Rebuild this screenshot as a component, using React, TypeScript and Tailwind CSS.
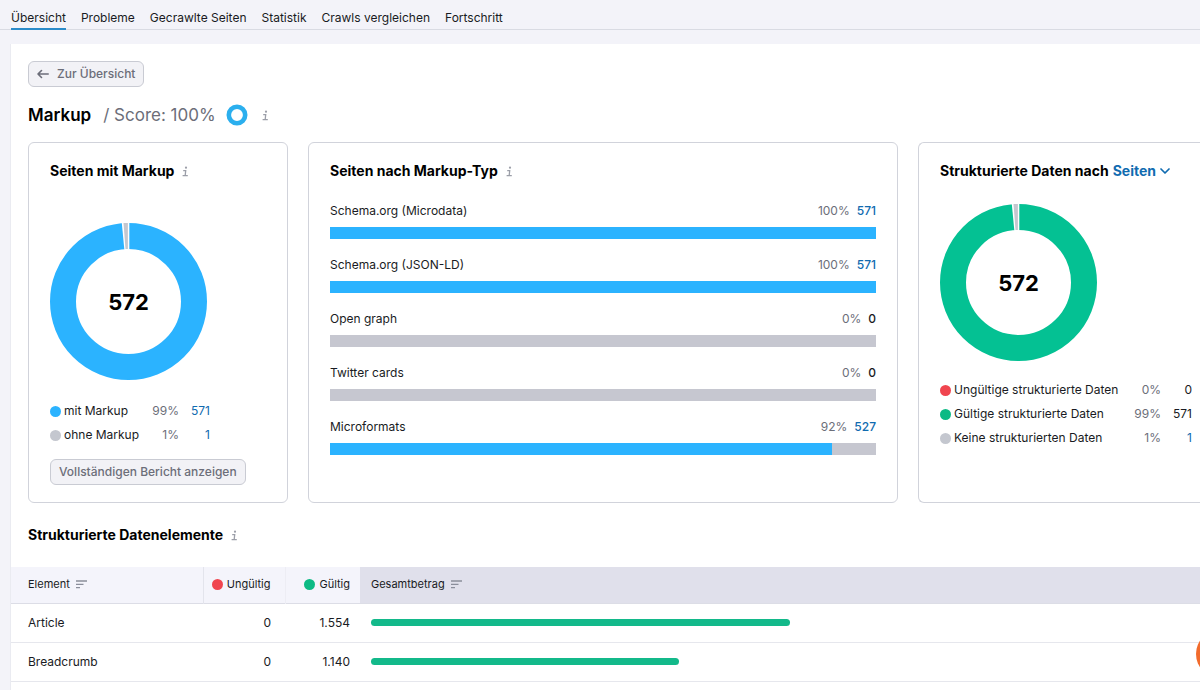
import { useState } from "react";
import clsx from "clsx";

const tabs = ["Übersicht", "Probleme", "Gecrawlte Seiten", "Statistik", "Crawls vergleichen", "Fortschritt"];

const markupTypes = [
    { name: "Schema.org (Microdata)", percent: 100, count: 571 },
    { name: "Schema.org (JSON-LD)", percent: 100, count: 571 },
    { name: "Open graph", percent: 0, count: 0 },
    { name: "Twitter cards", percent: 0, count: 0 },
    { name: "Microformats", percent: 92, count: 527 },
];

const elements = [
    { name: "Article", invalid: "0", valid: "1.554", width: 50.6 },
    { name: "Breadcrumb", invalid: "0", valid: "1.140", width: 37.1 },
];

type LegendItem = { label: string; percent: string; count: number; dot: string; link?: boolean };

const markupLegend: LegendItem[] = [
    { label: "mit Markup", percent: "99%", count: 571, dot: "bg-[#2bb3ff]", link: true },
    { label: "ohne Markup", percent: "1%", count: 1, dot: "bg-[#c4c7cf]", link: true },
];

const dataLegend: LegendItem[] = [
    { label: "Ungültige strukturierte Daten", percent: "0%", count: 0, dot: "bg-[#f0454f]" },
    { label: "Gültige strukturierte Daten", percent: "99%", count: 571, dot: "bg-[#0cba84]" },
    { label: "Keine strukturierten Daten", percent: "1%", count: 1, dot: "bg-[#c4c7cf]", link: true },
];

function InfoButton() {
    return (
        <button aria-label="Info" className="shrink-0 text-[#9b9ea8]">
            <svg width="7" height="11" viewBox="0 0 7 11" fill="none" stroke="currentColor" strokeWidth="1.3">
                <path d="M1.2 4.6H3.7L3.2 9.5M.6 9.6H5.8" />
                <circle cx="4" cy="1.7" r="1.1" fill="currentColor" stroke="none" />
            </svg>
        </button>
    );
}

function SortIcon() {
    return (
        <svg width="11" height="9" viewBox="0 0 11 9" fill="none" stroke="#8a8e9b" strokeWidth="1.3" aria-hidden="true">
            <path d="M0 1H11M0 4.3H7.5M0 7.6H4" />
        </svg>
    );
}

function Donut({ color, total }: { color: string; total: number }) {
    return (
        <svg width="157" height="157" viewBox="0 0 157 157" role="img" aria-label={`${total} Seiten`}>
            <circle cx="78.5" cy="78.5" r="65.5" fill="none" stroke={color} strokeWidth="26" />
            <path d="M71.7 -1H79.3V27H74.4Z" fill="#fff" />
            <path d="M73.5 0H77.9V26H75.5Z" fill="#c4c7cf" />
            <text x="78.5" y="87" textAnchor="middle" fill="#000" className="text-[22px] font-bold">
                {total}
            </text>
        </svg>
    );
}

function Legend({ items, className }: { items: LegendItem[]; className: string }) {
    return (
        <ul className={className}>
            {items.map((item) => (
                <li key={item.label} className="flex items-center h-6">
                    <span className={clsx("size-[11px] mr-[3px] rounded-full shrink-0", item.dot)} />
                    <span className="flex-1 whitespace-nowrap">{item.label}</span>
                    <span className="text-[#6c6e79]">{item.percent}</span>
                    <span className="w-[31px] text-right">
                        {item.link ? (
                            <a href="#" className="text-[#106bb0]">{item.count}</a>
                        ) : (
                            item.count
                        )}
                    </span>
                </li>
            ))}
        </ul>
    );
}

function MarkupTypeBar({ name, percent, count }: { name: string; percent: number; count: number }) {
    return (
        <div>
            <div className="flex items-center justify-between leading-5">
                <span>{name}</span>
                <span className="flex gap-[7px]">
                    <span className="text-[#6c6e79]">{percent}%</span>
                    {count > 0 ? (
                        <a href="#" className="font-medium text-[#106bb0]">{count}</a>
                    ) : (
                        <span className="font-medium">{count}</span>
                    )}
                </span>
            </div>
            <div className="h-3 mt-1.5 bg-[#c6c7d0]">
                <div className="h-full bg-[#2bb3ff]" style={{ width: `${percent}%` }} />
            </div>
        </div>
    );
}

export default function App() {
    const [activeTab, setActiveTab] = useState("Übersicht");

    return (
        <div className="flex flex-col min-h-screen overflow-x-hidden bg-[#f3f3f9] font-['Inter','Liberation_Sans',sans-serif] text-xs text-[#191b23]">
            <nav className="flex gap-[15px] h-[30px] px-[11px] border-b border-[#d9dbe3]">
                {tabs.map((tab) => (
                    <button
                        key={tab}
                        onClick={() => setActiveTab(tab)}
                        className={clsx(
                            "h-[30px] pt-[7px] whitespace-nowrap border-b-2",
                            tab === activeTab ? "border-[#2a8bc9]" : "border-transparent"
                        )}
                    >
                        {tab}
                    </button>
                ))}
            </nav>

            <main className="flex-1 mt-3.5 ml-2.5 bg-white border-l border-[#eaebf1]">
                <div className="pt-[17px] pl-[17px]">
                    <button className="flex items-center gap-2 h-[26px] px-2 rounded-md border border-[#c9cbd3] bg-[#f2f2f6] text-[#6c6e79] font-medium">
                        <svg width="12" height="10" viewBox="0 0 12 10" fill="none" stroke="currentColor" strokeWidth="1.6" strokeLinecap="round" strokeLinejoin="round">
                            <path d="M11.2 5H1M4.5 1.5L1 5L4.5 8.5" />
                        </svg>
                        Zur Übersicht
                    </button>

                    <div className="flex items-center h-6 mt-4 text-[17px]">
                        <h1 className="font-semibold text-black">Markup</h1>
                        <span className="ml-3 text-[#6c6e79]">/ Score: 100%</span>
                        <svg width="22" height="22" viewBox="0 0 22 22" className="ml-2.5 mr-3.5" aria-hidden="true">
                            <circle cx="11" cy="11" r="8.2" fill="none" stroke="#2bafee" strokeWidth="4.6" />
                        </svg>
                        <InfoButton />
                    </div>

                    <div className="grid grid-cols-[260px_1fr_282px] gap-5 mt-[15px]">
                        <section className="pt-[18px] pb-[17px] px-[21px] rounded-md border border-[#d1d3db]">
                            <div className="flex items-center gap-2 h-5">
                                <h2 className="text-sm font-bold text-black">Seiten mit Markup</h2>
                                <InfoButton />
                            </div>
                            <div className="mt-[42px]">
                                <Donut color="#2bb3ff" total={572} />
                            </div>
                            <Legend items={markupLegend} className="w-40 mt-[19px]" />
                            <button className="flex items-center h-[26px] mt-3 px-2 rounded-md border border-[#c9cbd3] bg-[#f2f2f6] text-[#6c6e79] font-medium whitespace-nowrap">
                                Vollständigen Bericht anzeigen
                            </button>
                        </section>

                        <section className="pt-[18px] px-[21px] rounded-md border border-[#d1d3db]">
                            <div className="flex items-center gap-2 h-5">
                                <h2 className="text-sm font-bold text-black">Seiten nach Markup-Typ</h2>
                                <InfoButton />
                            </div>
                            <div className="flex flex-col gap-4 mt-5">
                                {markupTypes.map((type) => (
                                    <MarkupTypeBar key={type.name} {...type} />
                                ))}
                            </div>
                        </section>

                        <section className="pt-[18px] pl-[21px] pr-2 rounded-l-md border border-r-0 border-[#d1d3db]">
                            <div className="flex items-center gap-1 h-5 text-sm font-bold whitespace-nowrap">
                                <h2 className="text-black">
                                    <label htmlFor="group">Strukturierte Daten nach</label>
                                </h2>
                                <select id="group" className="appearance-none field-sizing-content text-[#106bb0]">
                                    <option>Seiten</option>
                                    <option>Elementen</option>
                                </select>
                                <svg width="10" height="6" viewBox="0 0 10 6" fill="none" stroke="#106bb0" strokeWidth="1.7" strokeLinecap="round" strokeLinejoin="round">
                                    <path d="M1 1L5 5L9 1" />
                                </svg>
                            </div>
                            <div className="mt-[23px]">
                                <Donut color="#04c193" total={572} />
                            </div>
                            <Legend items={dataLegend} className="mt-[17px]" />
                        </section>
                    </div>

                    <div className="flex items-center gap-2 h-5 mt-[22px]">
                        <h2 className="text-sm font-bold text-black">Strukturierte Datenelemente</h2>
                        <InfoButton />
                    </div>
                </div>

                <table className="w-full mt-[22px] table-fixed border-collapse">
                    <colgroup>
                        <col className="w-[192px]" />
                        <col className="w-[82px]" />
                        <col className="w-[75px]" />
                        <col />
                    </colgroup>
                    <thead>
                        <tr className="h-9 bg-[#f4f4fb] border-b border-[#dcdde6] text-[11px] text-left">
                            <th className="pl-[17px] font-normal border-r border-[#e3e4ec]">
                                <button className="flex items-center gap-1.5">Element <SortIcon /></button>
                            </th>
                            <th className="pr-3.5 font-normal border-r border-[#ededf4]">
                                <span className="flex items-center justify-end gap-1">
                                    <span className="size-[11px] rounded-full bg-[#f0454f]" />
                                    Ungültig
                                </span>
                            </th>
                            <th className="pr-2.5 font-normal">
                                <span className="flex items-center justify-end gap-1">
                                    <span className="size-[11px] rounded-full bg-[#0cba84]" />
                                    Gültig
                                </span>
                            </th>
                            <th className="pl-[11px] font-normal bg-[#e0e0eb]">
                                <button className="flex items-center gap-1.5">Gesamtbetrag <SortIcon /></button>
                            </th>
                        </tr>
                    </thead>
                    <tbody>
                        {elements.map((el) => (
                            <tr key={el.name} className="h-[39px] border-b border-[#e6e7ed]">
                                <td className="pl-[17px]">{el.name}</td>
                                <td className="pr-3.5 text-right">{el.invalid}</td>
                                <td className="pr-2.5 text-right">{el.valid}</td>
                                <td className="pl-[11px]">
                                    <div className="h-[7px] rounded-full bg-[#13b98a]" style={{ width: `${el.width}%` }} />
                                </td>
                            </tr>
                        ))}
                    </tbody>
                </table>
            </main>

            <button aria-label="Chat" className="fixed bottom-3 -right-11 size-12 rounded-full bg-[#f26b2c]" />
        </div>
    );
}
